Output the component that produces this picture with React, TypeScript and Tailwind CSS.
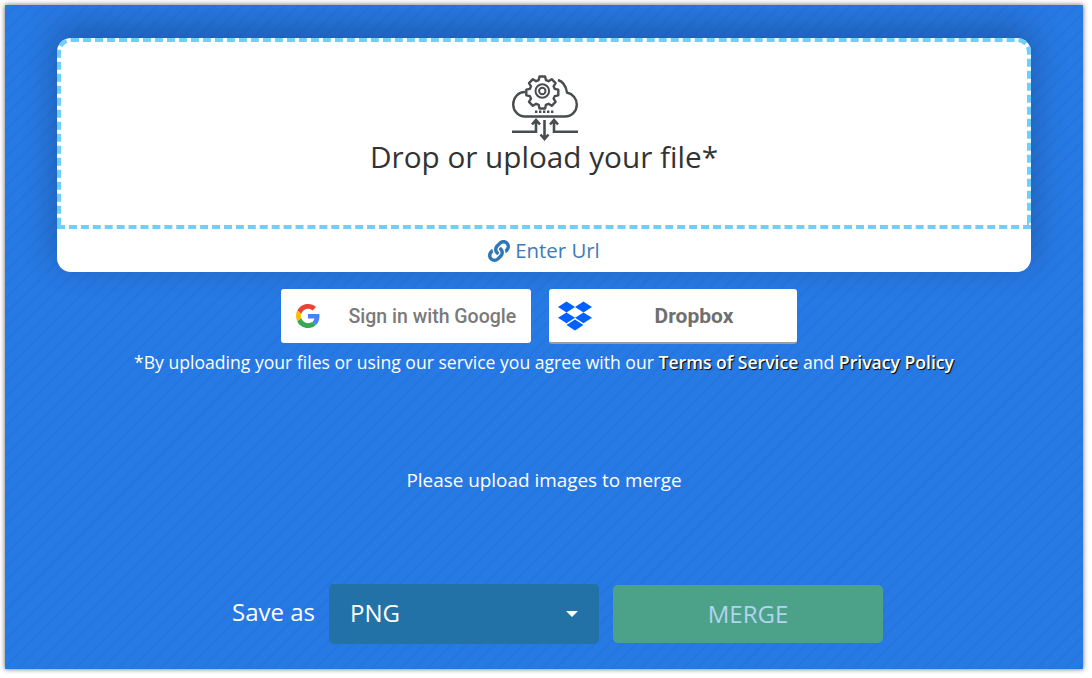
import { FaDropbox, FaLink } from 'react-icons/fa';

function CloudIcon() {
  return (
    <svg width="66" height="67" viewBox="0 0 66 67" fill="none" stroke="#4a4d4f" strokeWidth="2.4" className="ml-[2px]">
      {/* cloud */}
      <path d="M13 18C6 18 1.200 24 1.200 30.500C1.200 37 6.500 42.500 13 42.500H53C60 42.500 64.800 37 64.800 30.500C64.800 25 61 20 55 18.500C54 12 50.500 7.500 46 6" />
      {/* gear */}
      <path
        strokeLinejoin="round"
        d="M27.500 2.500h5.600l.8 3.600 2.600 1.100 3.200-2 3.900 3.900-2 3.200 1.100 2.600 3.600.8v5.600l-3.600.8-1.100 2.600 2 3.200-3.900 3.900-3.200-2-2.600 1.100-.8 3.600h-5.600l-.8-3.600-2.600-1.100-3.200 2-3.900-3.900 2-3.200-1.100-2.600-3.600-.8v-5.600l3.600-.8 1.100-2.600-2-3.200 3.900-3.900 3.200 2 2.600-1.100z"
      />
      <circle cx="30.300" cy="17" r="6.800" strokeWidth="2" />
      <circle cx="30.300" cy="17" r="3.200" strokeWidth="2" />
      {/* dots */}
      <path strokeDasharray="2.400 1.600" strokeWidth="2.400" d="M23 37.700H42" />
      {/* arrows */}
      <path strokeWidth="2.600" d="M0 57.700H24V47M66 57.700H42V47M20 50.500l4-4.500 4 4.500M38 50.500l4-4.500 4 4.500M32.500 46V64M28.500 60.500l4 4.500 4-4.500" />
    </svg>
  );
}

function GoogleIcon() {
  return (
    <svg width="24" height="24" viewBox="0 0 48 48">
      <path fill="#EA4335" d="M24 9.500c3.500 0 6.700 1.200 9.200 3.600l6.900-6.900C35.900 2.400 30.500 0 24 0 14.600 0 6.500 5.400 2.600 13.200l8 6.200C12.500 13.700 17.800 9.500 24 9.500z" />
      <path fill="#4285F4" d="M47 24.500c0-1.600-.1-3.100-.4-4.500H24v9h12.900c-.6 3-2.200 5.500-4.700 7.200l7.700 6C44.400 37.600 47 31.600 47 24.500z" />
      <path fill="#FBBC05" d="M10.600 28.600c-.5-1.400-.8-3-.8-4.600s.3-3.200.8-4.600l-8-6.200C.9 16.500 0 20.100 0 24s.9 7.500 2.600 10.800l8-6.200z" />
      <path fill="#34A853" d="M24 48c6.500 0 11.900-2.100 15.900-5.800l-7.700-6c-2.200 1.400-4.900 2.300-8.200 2.300-6.200 0-11.500-4.200-13.400-9.900l-8 6.200C6.500 42.600 14.600 48 24 48z" />
    </svg>
  );
}

export default function App() {
  return (
    <div className="w-[1092px] h-[678px] bg-white pt-[5px] pl-[5px] pr-[9px] pb-[9px] font-['Open_Sans',sans-serif] overflow-hidden">
      <div className="h-full bg-[#2779e3] bg-[repeating-linear-gradient(135deg,#2779e3_0px,#2779e3_7px,#2576e0_7px,#2576e0_10px)] shadow-[0_0_5px_rgba(0,0,0,0.6)] flex flex-col items-center pt-[33px] text-white">
        {/* Upload box */}
        <div className="w-[974px] h-[234px] bg-white rounded-[14px] shadow-[0_-10px_34px_rgba(0,0,0,0.25)] flex flex-col">
          <div className="h-[191px] border-4 border-dashed border-[#6ed0fa] rounded-t-[14px] flex flex-col items-center pt-[32px]">
            <CloudIcon />
            <p className="text-[29.700px] leading-[36px] text-[#333333] -mt-[2px]">Drop or upload your file*</p>
          </div>
          <div className="flex-1 flex items-center justify-center gap-[5px] text-[#3d7ab8] text-[20.400px]">
            <FaLink className="w-[22px] h-[22px] text-[#2f78b4]" />
            <span>Enter Url</span>
          </div>
        </div>

        {/* Cloud pickers */}
        <div className="flex gap-[18px] mt-[17px] mr-[11px]">
          <button className="w-[250px] h-[54px] bg-white rounded-[3px] flex items-center pl-[15px] font-['Roboto',sans-serif] font-medium text-[19.500px] text-[#7a7a7a]">
            <GoogleIcon />
            <span className="ml-[29px] mt-[2px]">Sign in with Google</span>
          </button>
          <button className="w-[248px] h-[55px] bg-white rounded-[3px] border-b-2 border-[#9a9ea3] flex items-center pl-[9px] font-['Roboto',sans-serif] font-bold text-[21px] text-[#6f6f6f]">
            <FaDropbox className="w-[34px] h-[34px] text-[#0061fe]" />
            <span className="ml-[63px] mt-[2px]">Dropbox</span>
          </button>
        </div>

        <p className="mt-[6px] text-[17.600px] leading-[24px]">
          *By uploading your files or using our service you agree with our{' '}
          <b className="font-semibold [text-shadow:1px_1px_1px_#000]">Terms of Service</b> and{' '}
          <b className="font-semibold [text-shadow:1px_1px_1px_#000]">Privacy Policy</b>
        </p>

        <p className="mt-[94px] text-[18.900px] leading-[24px]">Please upload images to merge</p>

        {/* Save row */}
        <div className="mt-[92px] self-start ml-[227px] flex items-center">
          <span className="text-[24px] leading-[32px] mr-[14px] -mt-[5px]">Save as</span>
          <div className="w-[270px] h-[60px] bg-[#2272a8] rounded-[5px] flex items-center justify-between pl-[21px] pr-[21px] text-[24px]">
            <span className="-mt-[2px]">PNG</span>
            <span className="w-0 h-0 border-x-[6px] border-x-transparent border-t-[6px] border-t-white" />
          </div>
          <button className="ml-[14px] w-[270px] h-[58px] bg-[#4ca289] rounded-[5px] text-[24px] text-[#b3d3ee]">MERGE</button>
        </div>
      </div>
    </div>
  );
}
